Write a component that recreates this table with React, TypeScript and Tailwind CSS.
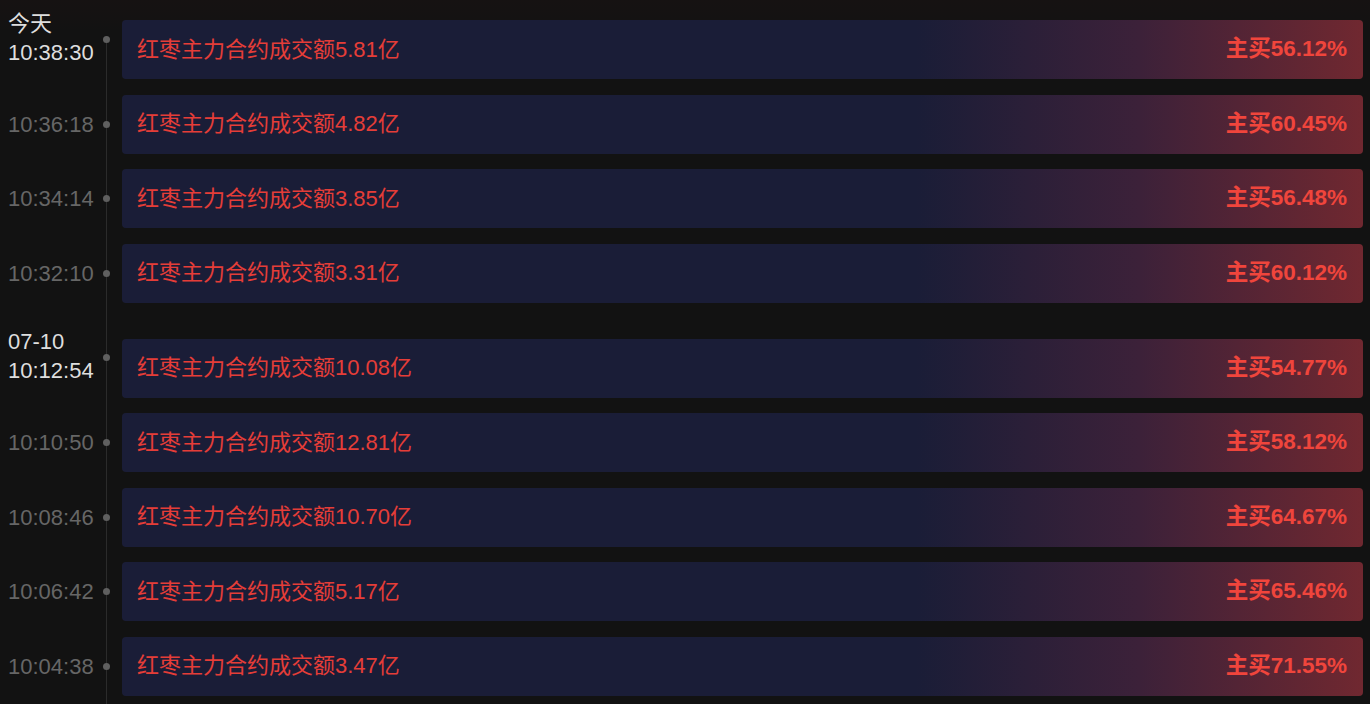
import React from "react";

type Row = { date?: string; time: string; amount: string; pct: string };

const groups: Row[][] = [
  [
    { date: "今天", time: "10:38:30", amount: "5.81", pct: "56.12" },
    { time: "10:36:18", amount: "4.82", pct: "60.45" },
    { time: "10:34:14", amount: "3.85", pct: "56.48" },
    { time: "10:32:10", amount: "3.31", pct: "60.12" },
  ],
  [
    { date: "07-10", time: "10:12:54", amount: "10.08", pct: "54.77" },
    { time: "10:10:50", amount: "12.81", pct: "58.12" },
    { time: "10:08:46", amount: "10.70", pct: "64.67" },
    { time: "10:06:42", amount: "5.17", pct: "65.46" },
    { time: "10:04:38", amount: "3.47", pct: "71.55" },
  ],
];

const font = { fontFamily: '"Liberation Sans", "Noto Sans CJK SC", sans-serif' };

function Item({ row }: { row: Row }) {
  const header = !!row.date;
  return (
    <div className="relative flex h-[59px] items-center">
      <div className="flex w-[122px] shrink-0 items-center pl-[8px]">
        {header ? (
          <div className="-translate-y-[12px] text-[22px] leading-[29px] text-[#dedede]">
            <div>{row.date}</div>
            <div>{row.time}</div>
          </div>
        ) : (
          <div className="text-[22px] leading-[29px] text-[#666666]">{row.time}</div>
        )}
      </div>
      <span
        className={
          header
            ? "absolute left-[103px] top-[15.5px] h-[7px] w-[7px] rounded-full bg-[#5f5f5f]"
            : "absolute left-[103px] top-[26px] h-[7px] w-[7px] rounded-full bg-[#5f5f5f]"
        }
      />
      <div className="flex h-full flex-1 items-center justify-between rounded-[4px] bg-[linear-gradient(to_right,#1a1d37_0%,#1a1d37_64%,#3c2139_82%,#702830_100%)] pl-[15px] pr-[16px]">
        <span className="text-[22px] leading-none text-[#e53d38]">红枣主力合约成交额{row.amount}亿</span>
        <span className="text-[22.5px] font-bold leading-none text-[#f0453c]">主买{row.pct}%</span>
      </div>
    </div>
  );
}

export default function App() {
  return (
    <div
      className="relative h-[704px] w-[1370px] overflow-hidden bg-[linear-gradient(to_bottom,#161212_0px,#141212_18px,#121212_30px,#121212_100%)] pr-[7px] pt-[20px]"
      style={font}
    >
      <div className="absolute bottom-0 left-[106px] top-[39px] w-px bg-[#2b2b2b]" />
      <div className="relative flex flex-col">
        {groups.map((g, gi) => (
          <div key={gi} className={gi > 0 ? "mt-[36px] flex flex-col gap-[15.5px]" : "flex flex-col gap-[15.5px]"}>
            {g.map((r, i) => (
              <Item key={i} row={r} />
            ))}
          </div>
        ))}
      </div>
    </div>
  );
}
